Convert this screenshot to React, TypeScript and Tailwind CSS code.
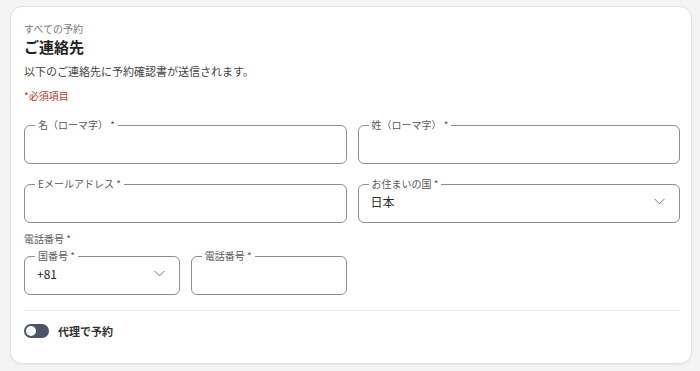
import { ChevronDown } from 'lucide-react';

// 連絡先フォーム
const font = { fontFamily: '"Noto Sans CJK JP", "Noto Sans", sans-serif' };

function Field({ label, value, select }: { label: string; value?: string; select?: boolean }) {
  return (
    <fieldset className="h-[45px] min-w-0 rounded-[6px] border border-[#8e8e8e] pl-[12px] pr-[10px]">
      <legend className="ml-[-2px] px-[3px] text-[10px] leading-[12px] text-[#5a5a5a]">{label}</legend>
      <div className="flex h-[27px] items-center justify-between pb-[4px]">
        <span className="text-[12px] text-[#2a2a2a]">{value}</span>
        {select && <ChevronDown size={19} strokeWidth={1.2} className="text-[#707070]" />}
      </div>
    </fieldset>
  );
}

export default function App() {
  return (
    <div className="min-h-screen bg-[#f4f4f4] pl-[10px] pr-[8px] pt-[6px] pb-[9px]" style={font}>
      <div className="rounded-[12px] border border-[#e2e2e2] bg-white pl-[13px] pr-[11px] pt-[15px] pb-[24px] shadow-[0_1px_2px_rgba(0,0,0,0.06)]">
        <p className="text-[10px] leading-[14px] text-[#7a7a7a]">すべての予約</p>
        <h2 className="mt-[1px] text-[15px] font-bold leading-[20px] text-[#1f1f1f]">ご連絡先</h2>
        <p className="mt-[6px] text-[11px] leading-[16px] text-[#444]">以下のご連絡先に予約確認書が送信されます。</p>
        <p className="mt-[10px] text-[10px] leading-[14px] text-[#c0392b]">*必須項目</p>

        <div className="mt-[16px] grid grid-cols-2 gap-x-[11px] gap-y-[14px]">
          <Field label="名（ローマ字） *" />
          <Field label="姓（ローマ字） *" />
          <Field label="Eメールアドレス *" />
          <Field label="お住まいの国 *" value="日本" select />
        </div>

        <p className="mt-[9px] text-[10px] leading-[14px] text-[#5a5a5a]">電話番号 *</p>
        <div className="mt-[4px] grid grid-cols-2 gap-x-[11px]">
          <div className="grid grid-cols-2 gap-x-[11px]">
            <Field label="国番号 *" value="+81" select />
            <Field label="電話番号 *" />
          </div>
        </div>

        <div className="mt-[15px] border-t border-[#e8e8e8]" />

        <div className="mt-[12px] flex items-center gap-[9px]">
          <div className="flex h-[14px] w-[25px] items-center rounded-full bg-[#4a5568] px-[2px]">
            <div className="h-[10px] w-[10px] rounded-full bg-white" />
          </div>
          <span className="text-[11px] font-bold leading-[16px] text-[#333]">代理で予約</span>
        </div>
      </div>
    </div>
  );
}
